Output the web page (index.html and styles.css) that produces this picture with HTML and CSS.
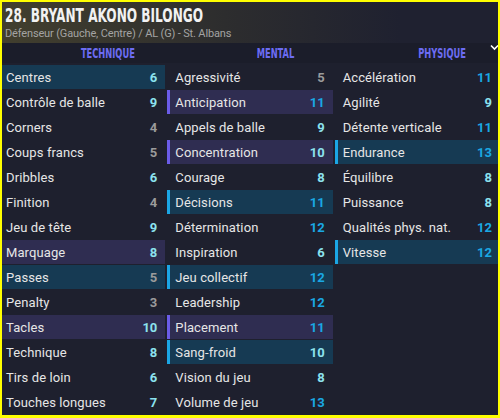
FILE: index.html
```html
<!DOCTYPE html>
<html lang="fr">
  <head>
    <meta charset="UTF-8" />
    <meta name="viewport" content="width=device-width, initial-scale=1.0" />
    <title>Attributs joueur</title>
    <link rel="stylesheet" href="styles.css">
  </head>
  <body>
    <div class="sheet">
      <header class="head">
        <h1 class="name"><span>28. BRYANT AKONO BILONGO</span></h1>
        <p class="role">Défenseur (Gauche, Centre) / AL (G) - St. Albans</p>
      </header>

      <div class="cols-head">
        <div class="col-title"><span>TECHNIQUE</span></div>
        <div class="col-title"><span>MENTAL</span></div>
        <div class="col-title"><span>PHYSIQUE</span></div>
        <svg class="toggle" width="10" height="7" viewBox="0 0 10 7">
          <polyline points="1,1.5 4.5,5 8,1.5" fill="none" stroke="#fff" stroke-width="1.6" />
        </svg>
      </div>

      <div class="cols">
        <!-- technique -->
        <ul class="col">
          <li class="attr teal"><span>Centres</span><b class="mid">6</b></li>
          <li class="attr"><span>Contrôle de balle</span><b class="mid">9</b></li>
          <li class="attr"><span>Corners</span><b class="low">4</b></li>
          <li class="attr"><span>Coups francs</span><b class="low">5</b></li>
          <li class="attr"><span>Dribbles</span><b class="mid">6</b></li>
          <li class="attr"><span>Finition</span><b class="low">4</b></li>
          <li class="attr"><span>Jeu de tête</span><b class="mid">9</b></li>
          <li class="attr purple"><span>Marquage</span><b class="mid">8</b></li>
          <li class="attr teal"><span>Passes</span><b class="low">5</b></li>
          <li class="attr"><span>Penalty</span><b class="low">3</b></li>
          <li class="attr purple"><span>Tacles</span><b class="mid">10</b></li>
          <li class="attr"><span>Technique</span><b class="mid">8</b></li>
          <li class="attr"><span>Tirs de loin</span><b class="mid">6</b></li>
          <li class="attr"><span>Touches longues</span><b class="mid">7</b></li>
        </ul>

        <!-- mental -->
        <ul class="col">
          <li class="attr"><span>Agressivité</span><b class="low">5</b></li>
          <li class="attr purple"><span>Anticipation</span><b class="high">11</b></li>
          <li class="attr"><span>Appels de balle</span><b class="mid">9</b></li>
          <li class="attr purple"><span>Concentration</span><b class="mid">10</b></li>
          <li class="attr"><span>Courage</span><b class="mid">8</b></li>
          <li class="attr teal"><span>Décisions</span><b class="high">11</b></li>
          <li class="attr"><span>Détermination</span><b class="high">12</b></li>
          <li class="attr"><span>Inspiration</span><b class="mid">6</b></li>
          <li class="attr teal"><span>Jeu collectif</span><b class="high">12</b></li>
          <li class="attr"><span>Leadership</span><b class="high">12</b></li>
          <li class="attr purple"><span>Placement</span><b class="high">11</b></li>
          <li class="attr teal"><span>Sang-froid</span><b class="mid">10</b></li>
          <li class="attr"><span>Vision du jeu</span><b class="mid">8</b></li>
          <li class="attr"><span>Volume de jeu</span><b class="high">13</b></li>
        </ul>

        <!-- physique -->
        <ul class="col">
          <li class="attr"><span>Accélération</span><b class="high">11</b></li>
          <li class="attr"><span>Agilité</span><b class="mid">9</b></li>
          <li class="attr"><span>Détente verticale</span><b class="high">11</b></li>
          <li class="attr teal"><span>Endurance</span><b class="high">13</b></li>
          <li class="attr"><span>Équilibre</span><b class="mid">8</b></li>
          <li class="attr"><span>Puissance</span><b class="mid">8</b></li>
          <li class="attr"><span>Qualités phys. nat.</span><b class="high">12</b></li>
          <li class="attr teal"><span>Vitesse</span><b class="high">12</b></li>
        </ul>
      </div>
    </div>
  </body>
</html>
```

FILE: styles.css
```css
body {
  margin: 0;
  padding: 0;
  background-color: #1e202e;
  font-family: Roboto, "Noto Sans", sans-serif;
}

.sheet {
  position: relative;
  width: 500px;
  height: 418px;
  overflow: hidden;
  background-color: #1e202e;
}

/* cadre jaune par-dessus le contenu */
.sheet::after {
  content: "";
  position: absolute;
  top: 0;
  left: 0;
  right: 0;
  bottom: 0;
  border: 2px solid #ffff00;
  border-bottom-width: 3px;
  pointer-events: none;
}

.head {
  height: 43px;
  box-sizing: border-box;
  padding: 3px 0 0 5px;
  background: linear-gradient(to right, #423f2e 0%, #2d2d2e 45%, #1f2130 80%);
}

.name {
  margin: 0;
  height: 24px;
  line-height: 24px;
  font-family: "DejaVu Sans", sans-serif;
  font-stretch: condensed;
  font-weight: bold;
  font-size: 19px;
  color: #f2f2f2;
  white-space: nowrap;
}

.name span {
  display: inline-block;
  transform: scaleX(0.71);
  transform-origin: left center;
}

.role {
  margin: 0;
  line-height: 14px;
  font-size: 11px;
  letter-spacing: -0.15px;
  color: #a3a3a3;
  white-space: nowrap;
}

.cols-head {
  position: relative;
  display: grid;
  grid-template-columns: repeat(3, 1fr);
  gap: 2px;
  height: 20px;
  margin-bottom: 2px;
  background-color: #1b1d2a;
}

.col-title {
  padding-left: 50px;
  text-align: center;
  line-height: 20px;
  font-family: "DejaVu Sans", sans-serif;
  font-stretch: condensed;
  font-weight: bold;
  font-size: 14px;
  color: #6c6cf2;
  white-space: nowrap;
}

.col-title span {
  display: inline-block;
  transform: scaleX(0.66);
}

.toggle {
  position: absolute;
  top: 1px;
  left: 490px;
}

.cols {
  display: grid;
  grid-template-columns: repeat(3, 1fr);
  gap: 2px;
}

.col {
  list-style: none;
  margin: 0;
  padding: 0;
  display: flex;
  flex-direction: column;
  gap: 1px;
}

.attr {
  display: flex;
  justify-content: space-between;
  align-items: center;
  height: 24px;
  padding: 0 8px 0 5px;
  border-left: 3px solid transparent;
  font-size: 13px;
  letter-spacing: 0.1px;
  color: #e6e6e6;
  white-space: nowrap;
}

/* la premiere colonne n'a pas de liseré visible */
.col:first-child .attr {
  border-left: 0;
  padding-left: 6px;
}

.attr.teal {
  background-color: #163a53;
  border-left-color: #1ba6e5;
}

.attr.purple {
  background-color: #2f2d51;
  border-left-color: #6b5ce8;
}

.attr b {
  font-size: 13px;
  font-weight: bold;
  letter-spacing: 0;
}

.low {
  color: #9b9b9b;
}

.mid {
  color: #8ce2ee;
}

.high {
  color: #1aa8e4;
}
```
